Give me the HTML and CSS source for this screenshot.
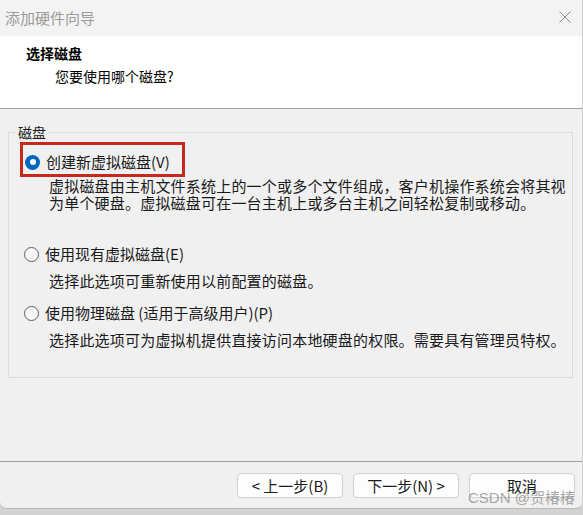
FILE: index.html
```html
<!DOCTYPE html>
<html lang="zh-CN">
<head>
<meta charset="utf-8">
<title>添加硬件向导</title>
<link rel="stylesheet" href="styles.css">
</head>
<body>
<div class="window">
  <div class="titlebar">
    <span class="wtitle">添加硬件向导</span>
    <svg class="close" width="12" height="12" viewBox="0 0 12 12"><path d="M0.5 0.5 L11.5 11.5 M11.5 0.5 L0.5 11.5" stroke="#8a8a8a" stroke-width="1" fill="none"/></svg>
  </div>
  <div class="header">
    <div class="h-title">选择磁盘</div>
    <div class="h-sub">您要使用哪个磁盘?</div>
  </div>
  <div class="content">
    <fieldset class="group">
      <legend>磁盘</legend>
      <div class="opt-label highlight"><span class="radio checked"></span>创建新虚拟磁盘(V)</div>
      <p class="desc d1">虚拟磁盘由主机文件系统上的一个或多个文件组成，客户机操作系统会将其视<br>为单个硬盘。虚拟磁盘可在一台主机上或多台主机之间轻松复制或移动。</p>
      <div class="opt-label o2"><span class="radio"></span>使用现有虚拟磁盘(E)</div>
      <p class="desc">选择此选项可重新使用以前配置的磁盘。</p>
      <div class="opt-label o3"><span class="radio"></span>使用物理磁盘 (适用于高级用户)(P)</div>
      <p class="desc">选择此选项可为虚拟机提供直接访问本地硬盘的权限。需要具有管理员特权。</p>
    </fieldset>
  </div>
  <div class="footer">
    <button class="btn">&lt; 上一步(B)</button>
    <button class="btn">下一步(N) &gt;</button>
    <button class="btn">取消</button>
  </div>
</div>
<div class="watermark">CSDN @贺椿椿</div>
</body>
</html>
```
FILE: styles.css
```css
html, body {
  margin: 0;
  padding: 0;
}
body {
  width: 583px;
  height: 515px;
  overflow: hidden;
  background: #d3d3d3;
  font-family: "Noto Sans CJK SC", "Noto Sans", sans-serif;
  color: #1a1a1a;
  position: relative;
}
.window {
  box-sizing: border-box;
  width: 583px;
  height: 509px;
  background: #f0f0f0;
  border-right: 1px solid #d0d0d0;
  border-bottom: 1px solid #b9b9b9;
  border-radius: 0 0 7px 7px;
  display: flex;
  flex-direction: column;
  overflow: hidden;
}
.titlebar {
  height: 36px;
  flex: none;
  background: #f3f3f3;
  display: flex;
  align-items: center;
  justify-content: space-between;
  padding: 0 11px 0 5px;
}
.wtitle {
  font-size: 15px;
  line-height: 20px;
  color: #9b9b9b;
}
.close {
  display: block;
  margin-top: -2px;
}
.header {
  flex: none;
  box-sizing: border-box;
  height: 73px;
  background: #ffffff;
  border-bottom: 1px solid #a0a0a0;
  padding: 7px 0 0 26px;
}
.h-title {
  font-size: 14px;
  line-height: 20px;
  font-weight: bold;
  color: #000;
}
.h-sub {
  font-size: 14px;
  line-height: 20px;
  margin: 3px 0 0 29px;
  color: #000;
}
.content {
  flex: 1;
}
.group {
  margin: 14px 9px 0 8px;
  border: 1px solid #dadada;
  padding: 0 0 29px 7px;
  min-width: 0;
}
.group legend {
  padding: 0 2px;
  font-size: 14px;
  line-height: 18px;
}
.opt-label {
  display: flex;
  align-items: center;
  font-size: 15px;
  line-height: 20px;
  margin-left: 8px;
}
.radio {
  box-sizing: border-box;
  width: 15px;
  height: 15px;
  border-radius: 50%;
  border: 1px solid #5c5c5c;
  background: #f7f7f7;
  margin-right: 6px;
  flex: none;
}
.radio.checked {
  border: none;
  background: #0067c0;
  display: flex;
  align-items: center;
  justify-content: center;
}
.radio.checked::after {
  content: "";
  width: 6px;
  height: 6px;
  border-radius: 50%;
  background: #ffffff;
}
.highlight {
  box-sizing: border-box;
  width: 165px;
  height: 35px;
  margin: 1px 0 0 4px;
  border: 3px solid #c4291c;
  padding: 7px 0 2px 2px;
}
.desc {
  margin: 8px 0 0 33px;
  font-size: 15px;
  line-height: 17px;
  letter-spacing: 0.2px;
  white-space: nowrap;
}
.desc.d1 {
  margin-top: 0;
}
.o2 {
  margin-top: 33px;
}
.o3 {
  margin-top: 14px;
}
.footer {
  flex: none;
  box-sizing: border-box;
  height: 47px;
  border-top: 1px solid #a0a0a0;
  display: flex;
  justify-content: flex-end;
  align-items: flex-start;
  gap: 10px;
  padding: 11px 7px 0 0;
}
.btn {
  box-sizing: border-box;
  width: 106px;
  height: 25px;
  background: #fdfdfd;
  border: 1px solid #d0d0d0;
  border-radius: 4px;
  font-family: "Noto Sans CJK SC", "Noto Sans", sans-serif;
  font-size: 15px;
  line-height: 20px;
  color: #1a1a1a;
  padding: 0;
}
.watermark {
  position: absolute;
  left: 468px;
  top: 488px;
  font-size: 15px;
  line-height: 20px;
  color: rgba(110, 110, 110, 0.6);
  font-family: "Liberation Sans", "Noto Sans CJK SC", sans-serif;
}
```
